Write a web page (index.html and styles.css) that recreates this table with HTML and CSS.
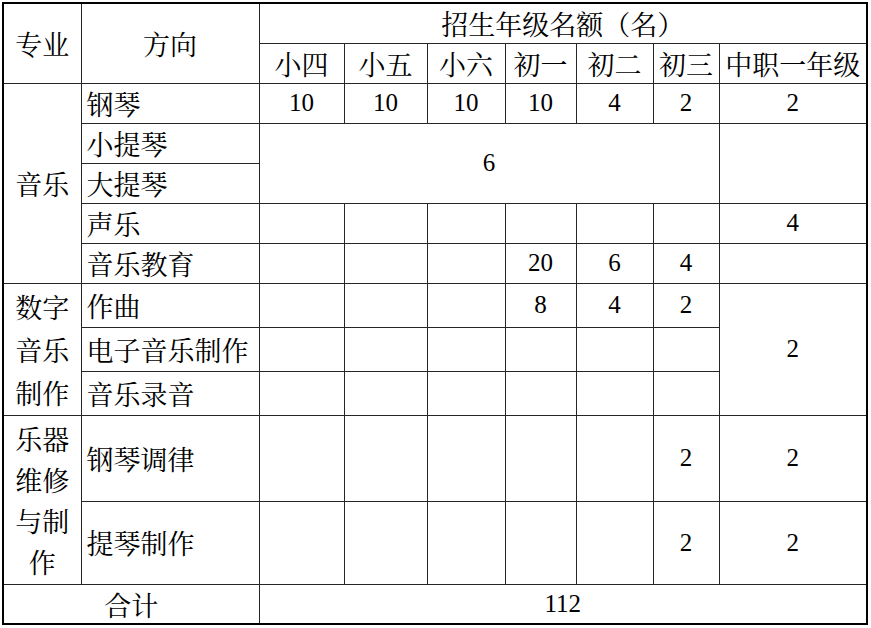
FILE: index.html
```html
<!DOCTYPE html>
<html lang="zh-CN">
<head>
<meta charset="utf-8">
<title>招生年级名额</title>
<link rel="stylesheet" href="styles.css">
</head>
<body>
<div class="wrap">
<table class="quota">
  <colgroup>
    <col class="c-major">
    <col class="c-dir">
    <col class="c-g1">
    <col class="c-g2">
    <col class="c-g3">
    <col class="c-g4">
    <col class="c-g5">
    <col class="c-g6">
    <col class="c-g7">
  </colgroup>
  <tr class="h40">
    <td rowspan="2" class="cjk">专业</td>
    <td rowspan="2" class="cjk">方向</td>
    <td colspan="7" class="cjk">招生年级名额（名）</td>
  </tr>
  <tr class="h40">
    <td class="cjk">小四</td>
    <td class="cjk">小五</td>
    <td class="cjk">小六</td>
    <td class="cjk">初一</td>
    <td class="cjk">初二</td>
    <td class="cjk">初三</td>
    <td class="cjk">中职一年级</td>
  </tr>
  <tr class="h40">
    <td rowspan="5" class="cjk">音乐</td>
    <td class="cjk dir">钢琴</td>
    <td class="num">10</td>
    <td class="num">10</td>
    <td class="num">10</td>
    <td class="num">10</td>
    <td class="num">4</td>
    <td class="num">2</td>
    <td class="num">2</td>
  </tr>
  <tr class="h40">
    <td class="cjk dir">小提琴</td>
    <td colspan="6" rowspan="2" class="num">6</td>
    <td rowspan="2"></td>
  </tr>
  <tr class="h40">
    <td class="cjk dir">大提琴</td>
  </tr>
  <tr class="h40">
    <td class="cjk dir">声乐</td>
    <td></td><td></td><td></td><td></td><td></td><td></td>
    <td class="num">4</td>
  </tr>
  <tr class="h40">
    <td class="cjk dir">音乐教育</td>
    <td></td><td></td><td></td>
    <td class="num">20</td>
    <td class="num">6</td>
    <td class="num">4</td>
    <td></td>
  </tr>
  <tr class="h44">
    <td rowspan="3" class="cjk multi">数字音乐制作</td>
    <td class="cjk dir">作曲</td>
    <td></td><td></td><td></td>
    <td class="num">8</td>
    <td class="num">4</td>
    <td class="num">2</td>
    <td rowspan="3" class="num">2</td>
  </tr>
  <tr class="h44">
    <td class="cjk dir">电子音乐制作</td>
    <td></td><td></td><td></td><td></td><td></td><td></td>
  </tr>
  <tr class="h44">
    <td class="cjk dir">音乐录音</td>
    <td></td><td></td><td></td><td></td><td></td><td></td>
  </tr>
  <tr class="h86">
    <td rowspan="2" class="cjk multi tight">乐器维修与制作</td>
    <td class="cjk dir">钢琴调律</td>
    <td></td><td></td><td></td><td></td><td></td>
    <td class="num">2</td>
    <td class="num">2</td>
  </tr>
  <tr class="h83">
    <td class="cjk dir">提琴制作</td>
    <td></td><td></td><td></td><td></td><td></td>
    <td class="num">2</td>
    <td class="num">2</td>
  </tr>
  <tr class="h40">
    <td colspan="2" class="cjk">合计</td>
    <td colspan="7" class="num">112</td>
  </tr>
</table>
</div>
</body>
</html>
```

FILE: styles.css
```css
html, body {
  margin: 0;
  padding: 0;
  background: #ffffff;
}

.wrap {
  padding: 2px 0 0 2px;
}

.quota {
  border-collapse: collapse;
  table-layout: fixed;
  width: 866px;
  border: 2px solid #000;
  color: #000;
}

.quota td {
  border: 1px solid #262626;
  padding: 0;
  text-align: center;
  vertical-align: middle;
  line-height: 1.2;
}

.c-major { width: 78px; }
.c-dir { width: 178px; }
.c-g1 { width: 85px; }
.c-g2 { width: 83px; }
.c-g3 { width: 78px; }
.c-g4 { width: 71px; }
.c-g5 { width: 77px; }
.c-g6 { width: 66px; }
.c-g7 { width: 148px; }

.h40 { height: 40px; }
.h44 { height: 44px; }
.h86 { height: 86px; }
.h83 { height: 83px; }

.quota td.cjk {
  font-family: "Noto Serif CJK SC", "Noto Sans CJK SC", serif;
  font-size: 27px;
  white-space: nowrap;
  padding-top: 2px;
}

.quota td.num {
  font-family: "Liberation Serif", serif;
  font-size: 25px;
}

.quota td.dir {
  text-align: left;
  padding-left: 5px;
}

.quota td.multi {
  white-space: normal;
  line-height: 43px;
  padding: 0 8px;
}

.quota td.tight {
  line-height: 41px;
}
```
